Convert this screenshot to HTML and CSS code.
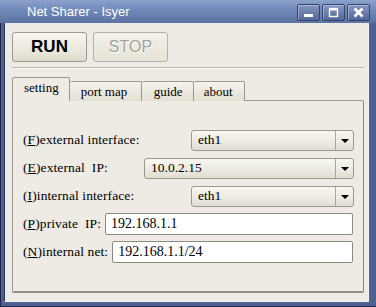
FILE: index.html
```html
<!DOCTYPE html>
<html>
<head>
  <meta charset="UTF-8">
  <title>Net Sharer - Isyer</title>
  <link rel="stylesheet" href="styles.css">
</head>
<body>
  <div class="window">
    <!-- Barra de título -->
    <div class="titlebar">
      <span class="title">Net Sharer - Isyer</span>
      <div class="wm-buttons">
        <span class="wm-btn">
          <svg width="11" height="11" viewBox="0 0 11 11"><rect x="1" y="7" width="9" height="3" fill="#fff"/></svg>
        </span>
        <span class="wm-btn">
          <svg width="11" height="11" viewBox="0 0 11 11"><rect x="1.5" y="1.5" width="8" height="8" fill="none" stroke="#fff" stroke-width="1.4"/><rect x="1" y="1" width="9" height="2.5" fill="#fff"/></svg>
        </span>
        <span class="wm-btn">
          <svg width="11" height="11" viewBox="0 0 11 11"><path d="M1.5 1.5 L9.5 9.5 M9.5 1.5 L1.5 9.5" stroke="#fff" stroke-width="2.6"/></svg>
        </span>
      </div>
    </div>

    <div class="client">
      <div class="toolbar">
        <button class="btn run">RUN</button>
        <button class="btn stop" disabled>STOP</button>
      </div>
      <div class="sep"></div>

      <div class="tabs">
        <span class="tab active">setting</span>
        <span class="tab">port map</span>
        <span class="tab">guide</span>
        <span class="tab">about</span>
      </div>

      <div class="pane">
        <div class="row">
          <span class="label">(<u>F</u>)external interface:</span>
          <div class="combo short"><span class="value">eth1</span><span class="arrow"></span></div>
        </div>
        <div class="row">
          <span class="label">(<u>E</u>)external  IP:</span>
          <div class="combo long"><span class="value">10.0.2.15</span><span class="arrow"></span></div>
        </div>
        <div class="row">
          <span class="label">(<u>I</u>)internal interface:</span>
          <div class="combo short"><span class="value">eth1</span><span class="arrow"></span></div>
        </div>
        <div class="row">
          <span class="label">(<u>P</u>)private  IP:</span>
          <div class="entry">192.168.1.1</div>
        </div>
        <div class="row">
          <span class="label">(<u>N</u>)internal net:</span>
          <div class="entry">192.168.1.1/24</div>
        </div>
      </div>
    </div>
  </div>
</body>
</html>
```

FILE: styles.css
```css
:root {
  --bg: #edebe3;
  --border: #9a988e;
  --frame: #4d6194;
  --text: #000000;
}
body {
  margin: 0;
  background: var(--frame);
}
.window {
  width: 376px;
  height: 307px;
  box-sizing: border-box;
  display: flex;
  flex-direction: column;
  background: var(--frame);
  border-left: 1px solid #1d2845;
  border-bottom: 1px solid #1d2845;
}
/* Barra de título */
.titlebar {
  height: 23px;
  flex: none;
  display: flex;
  align-items: center;
  background: linear-gradient(#8ca1cb, #7088b8 45%, #5b72a3);
  margin-left: -1px;
}
.title {
  font-family: "Liberation Sans", Arial, sans-serif;
  font-size: 13px;
  color: #ffffff;
  margin-left: 27px;
  flex: 1;
}
.wm-buttons {
  display: flex;
  gap: 2px;
  margin-right: 6px;
  margin-top: 1px;
}
.wm-btn {
  width: 21px;
  height: 15px;
  border: 1px solid #33436a;
  border-radius: 2px;
  background: linear-gradient(#8497c0, #6a7fab 50%, #54689a);
  box-shadow: inset 1px 1px 0 rgba(255, 255, 255, 0.35);
  display: flex;
  align-items: center;
  justify-content: center;
}
.client {
  flex: 1;
  margin: 0 7px 4px 3px;
  background: var(--bg);
  border-left: 1px solid #2a375c;
  border-right: 1px solid #f4f3ee;
  border-bottom: 1px solid #f4f3ee;
  padding: 9px 4px 0 7px;
  display: flex;
  flex-direction: column;
}
.toolbar {
  display: flex;
  gap: 6px;
}
.btn {
  width: 75px;
  height: 30px;
  border: 1px solid #9c9a90;
  border-radius: 3px;
  background: linear-gradient(#f7f5ee, #ebe8dd 60%, #dedbce);
  font-family: "Liberation Sans", Arial, sans-serif;
  padding: 0;
}
.run {
  font-size: 17px;
  font-weight: bold;
  color: #000;
}
.stop {
  font-size: 16px;
  color: #a3a199;
  text-shadow: 1px 1px 0 #ffffff;
  background: linear-gradient(#f2f0e8, #e6e3d8);
  border-color: #b4b2a8;
}
.sep {
  height: 1px;
  background: #b8b6ac;
  border-bottom: 1px solid #fbfaf6;
  margin-top: 5px;
}
/* Pestañas */
.tabs {
  display: flex;
  align-items: flex-end;
  margin-top: 8px;
  height: 24px;
  position: relative;
  z-index: 1;
  margin-bottom: -1px;
}
.tab {
  font-family: "Liberation Serif", "Times New Roman", serif;
  font-size: 13px;
  height: 19px;
  line-height: 19px;
  padding: 0 12px;
  border: 1px solid var(--border);
  border-bottom: none;
  border-left: none;
  border-radius: 2px 2px 0 0;
  background: linear-gradient(#f5f3ec, #e2dfd3);
  color: var(--text);
}
.tab.active {
  height: 23px;
  line-height: 20px;
  border-left: 1px solid var(--border);
  background: var(--bg);
  padding: 0 10px 0 11px;
}
.tab:nth-child(2) { width: 49px; padding: 0 11px; }
.tab:nth-child(3) { width: 27px; padding: 0 12px; }
.tab:nth-child(4) { width: 30px; padding: 0 10px; }
.pane {
  height: 193px;
  box-sizing: border-box;
  border: 1px solid var(--border);
  border-right-color: #8a887e;
  border-bottom: 2px solid #8f8d84;
  border-radius: 0 2px 2px 2px;
  padding: 28px 9px 0 10px;
  display: flex;
  flex-direction: column;
  gap: 6px;
}
.row {
  display: flex;
  align-items: center;
  height: 22px;
}
.label {
  font-family: "Liberation Serif", "Times New Roman", serif;
  font-size: 13.5px;
  letter-spacing: 0.1px;
  white-space: pre;
  color: var(--text);
  margin-right: 4px;
}
.combo {
  margin-left: auto;
  height: 21px;
  box-sizing: border-box;
  border: 1px solid var(--border);
  border-radius: 3px;
  background: linear-gradient(#f8f7f1, #eceae1 55%, #e1ded3);
  display: flex;
  align-items: center;
  font-family: "Liberation Serif", "Times New Roman", serif;
  font-size: 13.5px;
}
.combo.short { width: 163px; }
.combo.long { width: 210px; }
.combo .value {
  flex: 1;
  padding-left: 6px;
}
.combo .arrow {
  width: 17px;
  height: 19px;
  border-left: 1px solid #a8a69c;
  position: relative;
}
.combo .arrow::after {
  content: "";
  position: absolute;
  left: 5px;
  top: 8px;
  border-left: 4px solid transparent;
  border-right: 4px solid transparent;
  border-top: 4px solid #000;
}
.entry {
  flex: 1;
  height: 22px;
  box-sizing: border-box;
  border: 1px solid #8c8a82;
  border-radius: 2px;
  background: #ffffff;
  font-family: "Liberation Serif", "Times New Roman", serif;
  font-size: 14px;
  line-height: 20px;
  padding-left: 5px;
  margin-right: 1px;
}
```
